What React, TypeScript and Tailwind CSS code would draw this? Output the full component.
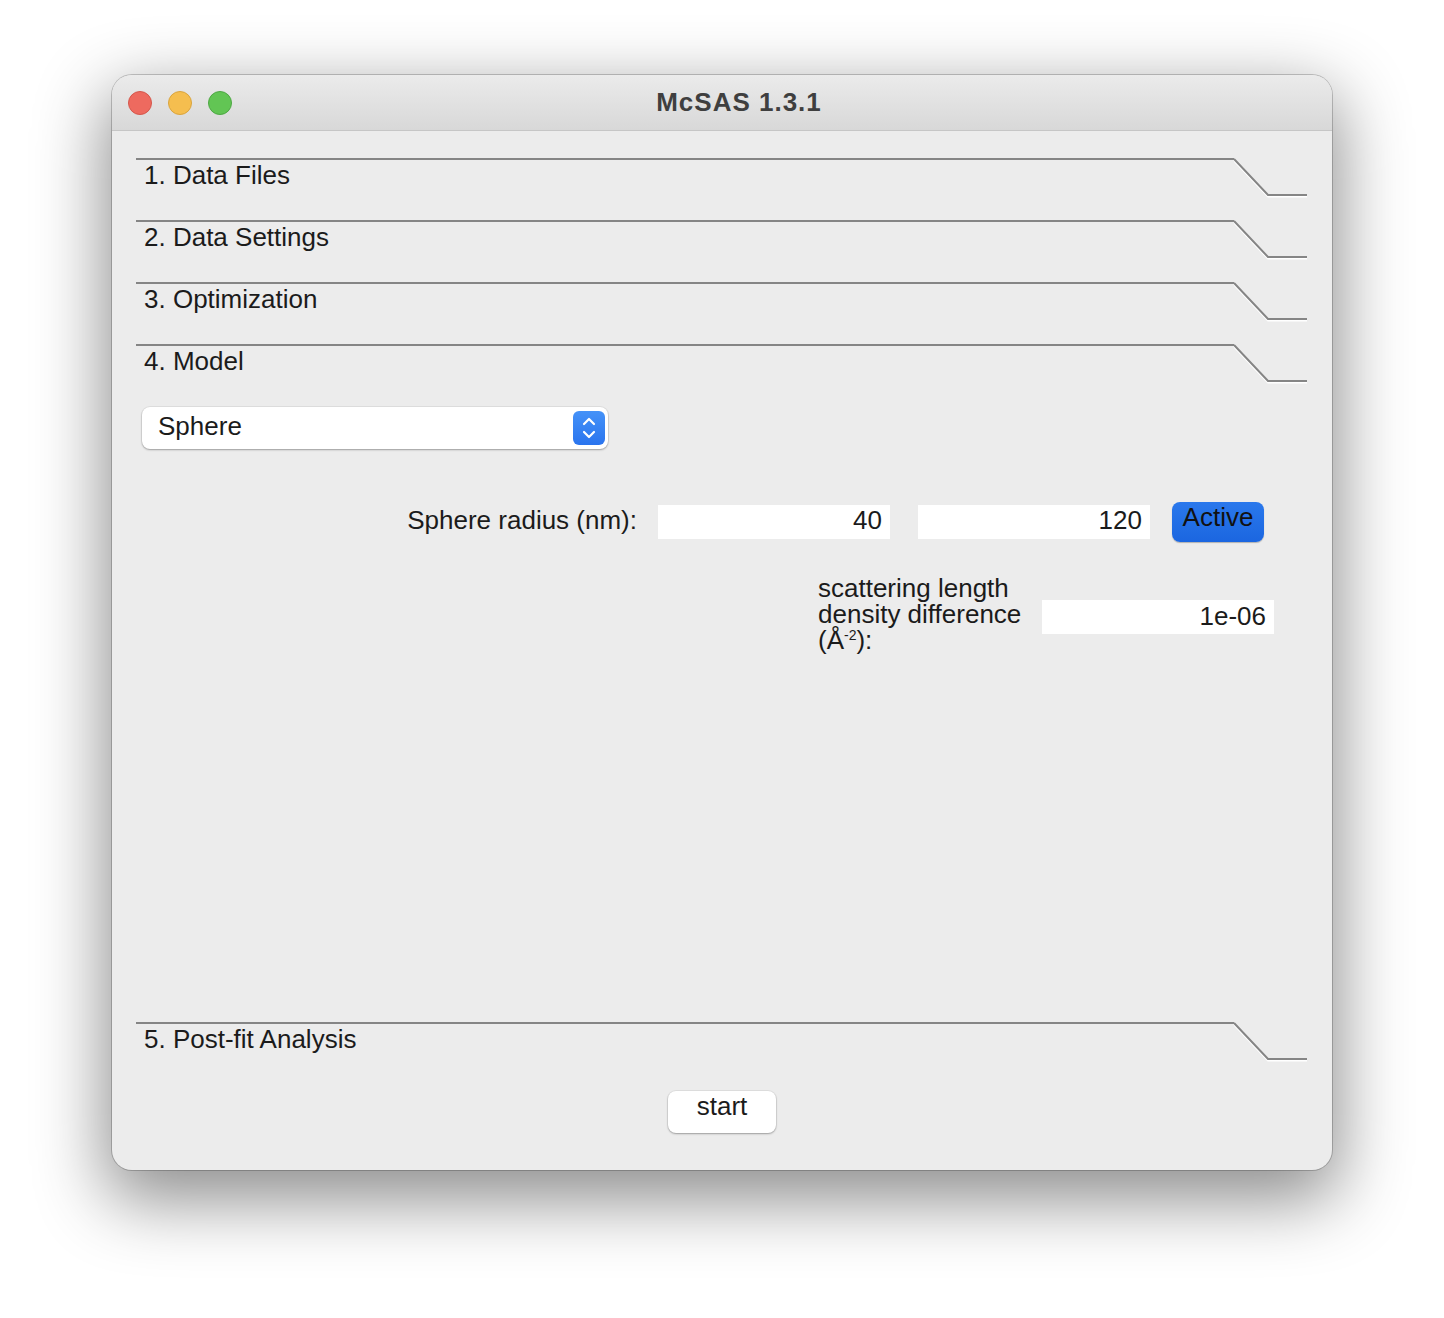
import React from "react";

const font = { fontFamily: '"Liberation Sans", Arial, sans-serif' };

function SectionHeader({ title }: { title: string }) {
  return (
    <div className="flex h-[62px] flex-row">
      <div className="flex-1 border-t-2 border-[#858585]">
        <div className="pl-[8px] text-[26px] leading-[30px] text-[#1b1b1b]">
          {title}
        </div>
      </div>
      <svg width="74" height="40" className="flex-none" viewBox="0 0 74 40">
        <polyline points="0,1 34,37 73,37" fill="none" stroke="#ffffff" strokeWidth="2" transform="translate(0,1.5)" />
        <polyline points="0,1 34,37 73,37" fill="none" stroke="#858585" strokeWidth="2" />
      </svg>
    </div>
  );
}

export default function App() {
  return (
    <div className="min-h-[1318px] w-full bg-white pt-[75px]" style={font}>
      <div className="mx-auto flex h-[1095px] w-[1220px] flex-col overflow-hidden rounded-[20px] bg-[#ececec] shadow-[0_24px_70px_6px_rgba(0,0,0,0.45)] ring-1 ring-black/20">
        {/* title bar */}
        <div className="relative flex h-[56px] flex-none items-center border-b border-[#c6c6c6] bg-gradient-to-b from-[#ebebeb] to-[#d8d8d8]">
          <div className="flex flex-row gap-[16px] pl-[16px]">
            <div className="h-[24px] w-[24px] rounded-full border border-[#d4574c] bg-[#ee6a5f]" />
            <div className="h-[24px] w-[24px] rounded-full border border-[#d9a43e] bg-[#f5be4f]" />
            <div className="h-[24px] w-[24px] rounded-full border border-[#4ea744] bg-[#62c554]" />
          </div>
          <div className="absolute inset-0 flex items-center justify-center pl-[34px] text-[26px] font-bold tracking-[1px] text-[#3f3f3f]">
            McSAS 1.3.1
          </div>
        </div>

        {/* body */}
        <div className="flex flex-1 flex-col px-[24px] pt-[27px] pb-[37px]">
          <SectionHeader title="1. Data Files" />
          <SectionHeader title="2. Data Settings" />
          <SectionHeader title="3. Optimization" />
          <SectionHeader title="4. Model" />

          <div className="mt-[1px] ml-[6px] flex h-[42px] w-[466px] items-center justify-between rounded-[8px] bg-white pl-[16px] pr-[3px] shadow-[0_1px_2px_rgba(0,0,0,0.3)] ring-1 ring-black/5">
            <span className="-mt-[4px] text-[26px] leading-[30px] text-[#1b1b1b]">Sphere</span>
            <div className="flex h-[34px] w-[32px] items-center justify-center rounded-[6px] bg-gradient-to-b from-[#4592f8] to-[#2a74ee]">
              <svg width="16" height="26" viewBox="0 0 16 26">
                <polyline points="3,9 8,4 13,9" fill="none" stroke="white" strokeWidth="2.2" strokeLinecap="round" strokeLinejoin="round" />
                <polyline points="3,17 8,22 13,17" fill="none" stroke="white" strokeWidth="2.2" strokeLinecap="round" strokeLinejoin="round" />
              </svg>
            </div>
          </div>

          <div className="mt-[53px] flex h-[40px] flex-row items-center justify-end pr-[44px]">
            <span className="-mt-[4px] text-[26px] leading-[30px] text-[#1b1b1b]">Sphere radius (nm):</span>
            <div className="ml-[21px] h-[34px] w-[232px] bg-white pr-[8px] text-right text-[26px] leading-[30px] text-[#1b1b1b]">
              40
            </div>
            <div className="ml-[28px] h-[34px] w-[232px] bg-white pr-[8px] text-right text-[26px] leading-[30px] text-[#1b1b1b]">
              120
            </div>
            <div className="ml-[22px] flex h-[40px] w-[92px] justify-center rounded-[8px] bg-gradient-to-b from-[#2a78ec] to-[#1b66e0] text-[26px] leading-[30px] text-[#111111] shadow-[0_1px_1px_rgba(0,0,0,0.25)]">
              Active
            </div>
          </div>

          <div className="mt-[33px] flex h-[78px] flex-row items-center justify-end pr-[34px]">
            <div className="w-[205px] text-[26px] leading-[26px] text-[#1b1b1b]">
              scattering length density difference (Å
              <span className="relative -top-[9px] text-[14px] leading-none">-2</span>):
            </div>
            <div className="ml-[19px] mt-[6px] h-[34px] w-[232px] bg-white pr-[8px] text-right text-[26px] leading-[32px] text-[#1b1b1b]">
              1e-06
            </div>
          </div>

          <div className="flex-1" />

          <SectionHeader title="5. Post-fit Analysis" />

          <div className="mt-[7px] flex justify-center">
            <div className="flex h-[42px] w-[108px] justify-center rounded-[8px] bg-white text-[26px] leading-[30px] text-[#1b1b1b] shadow-[0_1px_2px_rgba(0,0,0,0.3)] ring-1 ring-black/5">
              start
            </div>
          </div>
        </div>
      </div>
    </div>
  );
}
